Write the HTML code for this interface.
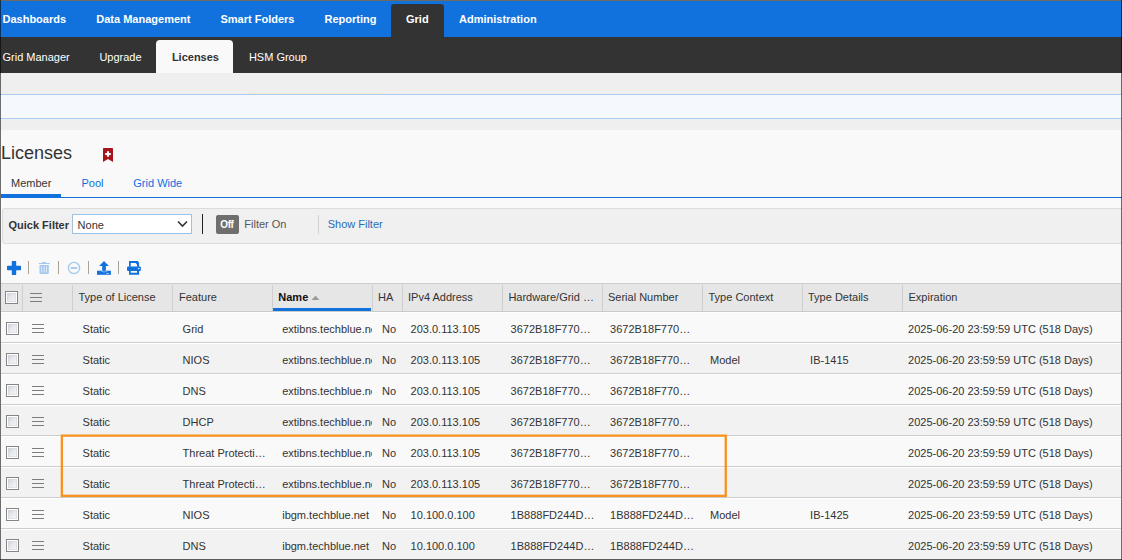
<!DOCTYPE html>
<html><head><meta charset="utf-8">
<style>
*{margin:0;padding:0;box-sizing:border-box}
html,body{width:1122px;height:560px;overflow:hidden;background:#f9f9f9;font-family:"Liberation Sans",sans-serif;font-size:11px;color:#333}
.a{position:absolute;white-space:nowrap}
#nav{position:absolute;left:0;top:0;width:1122px;height:37px;background:#1172de}
#nav .i{position:absolute;top:0;height:37px;line-height:38px;color:#fff;font-weight:bold}
#nav .act{background:#333;top:4px;height:33px;line-height:30px;border-radius:3px 3px 0 0}
#sub{position:absolute;left:0;top:37px;width:1122px;height:36px;background:#333}
#sub .i{position:absolute;top:0;height:36px;line-height:40px;color:#fff}
#sub .act{background:#f9f9f9;top:3px;height:33px;line-height:34px;border-radius:4px 4px 0 0;color:#333;font-weight:bold}
#strip{position:absolute;left:0;top:73px;width:1122px;height:57px;background:#efefef}
#bluebox{position:absolute;left:0;top:94px;width:1122px;height:25px;background:#f5f9fe;border-top:1px solid #a9cbf1;border-bottom:1px solid #a9cbf1}

.title{position:absolute;left:1px;top:143px;font-size:18px;line-height:20px;color:#333}
.tab{position:absolute;top:176px;line-height:14px;color:#0e6fe0}
#filter{position:absolute;left:2px;top:208px;width:1130px;height:36px;background:#f0f0f0;border:1px solid #dcdcdc;border-radius:3px}
.tb-sep{position:absolute;top:261px;width:1px;height:13px;background:#aaa497}
#thead{position:absolute;left:1px;top:283px;width:1120px;height:29px;background:#e6e6e6;border-top:1px solid #cdcdcd;border-bottom:1px solid #cbcbcb}
.th{position:absolute;top:0;height:27px;line-height:14px;padding-top:6px;color:#333;overflow:hidden;text-overflow:ellipsis;white-space:nowrap}
.vd{position:absolute;top:1px;width:1px;height:26px;background:#cfcfcf}
.row{position:absolute;left:1px;width:1120px;height:31px;border-bottom:1px solid #cdcdcd;box-shadow:inset 0 1px 0 #fff}
.td{position:absolute;top:0;height:30px;line-height:14px;padding-top:10px;padding-left:10px;color:#333;overflow:hidden;white-space:nowrap}
.el{text-overflow:ellipsis}
.cb{position:absolute;width:13px;height:13px;border:1.5px solid #858585;background:linear-gradient(135deg,#c3c8d3 0%,#e6e8ec 45%,#fafafa 100%);box-shadow:inset 0 0 0 1px #fff,inset 0 0 0 1.6px #d3d6dc}
.hb{position:absolute;width:12px;height:9px;border-top:1px solid #7d7d7d;border-bottom:1px solid #7d7d7d}
.hb:after{content:"";position:absolute;left:0;top:3px;width:12px;height:1px;background:#7d7d7d}
.frame{position:absolute;background:rgba(0,0,0,.56)}
</style></head><body>
<div id="nav">
  <div class="i" style="left:2.5px">Dashboards</div>
  <div class="i" style="left:96.3px">Data Management</div>
  <div class="i" style="left:220.5px">Smart Folders</div>
  <div class="i" style="left:324.5px">Reporting</div>
  <div class="i act" style="left:391px;width:52.6px;padding-left:15px">Grid</div>
  <div class="i" style="left:459px">Administration</div>
</div>
<div id="sub">
  <div class="i" style="left:2.5px">Grid Manager</div>
  <div class="i" style="left:99.4px">Upgrade</div>
  <div class="i act" style="left:156px;width:77px;padding-left:15.9px">Licenses</div>
  <div class="i" style="left:248.9px">HSM Group</div>
</div>
<div id="strip"></div>
<div id="bluebox"></div>
<div class="a" style="left:255px;top:93px;width:131px;height:1px;background:#f4efcc"></div>
<div class="a" style="left:249px;top:93px;width:4px;height:1px;background:#f6f09a"></div>

<div class="title">Licenses</div>
<svg class="a" style="left:103px;top:148px" width="10" height="14" viewBox="0 0 10 14"><path d="M0.8 0H9.2Q10 0 10 0.8V14L5 11L0 14V0.8Q0 0 0.8 0Z" fill="#a8141c"/><path d="M5 3.2V8.8M2.2 6H7.8" stroke="#fff" stroke-width="2.1"/></svg>
<div class="tab" style="left:11px;color:#333">Member</div>
<div class="tab" style="left:81.5px">Pool</div>
<div class="tab" style="left:133.3px">Grid Wide</div>
<div class="a" style="left:1px;top:194px;width:60px;height:4px;background:#1172de"></div>
<div class="a" style="left:1px;top:197px;width:1121px;height:1px;background:#1172de"></div>

<div id="filter"></div>
<div class="a" style="left:8.5px;top:218px;line-height:14px;font-weight:bold;color:#333">Quick Filter</div>
<div class="a" style="left:72px;top:214px;width:120px;height:20px;background:#fff;border:1px solid #97c3f0;border-left-color:#aabfd3"></div>
<div class="a" style="left:77.6px;top:218px;line-height:14px;color:#333">None</div>
<svg class="a" style="left:177px;top:220px" width="11" height="8" viewBox="0 0 11 8"><path d="M1 1.5L5.5 6L10 1.5" fill="none" stroke="#333" stroke-width="1.6"/></svg>
<div class="a" style="left:202px;top:214px;width:1px;height:20px;background:#222"></div>
<div class="a" style="left:216.2px;top:215px;width:22.6px;height:18.6px;background:#6e6e6e;border-radius:2px"></div>
<div class="a" style="left:220.3px;top:219px;line-height:12px;font-size:10px;letter-spacing:-0.4px;font-weight:bold;color:#fff">Off</div>
<div class="a" style="left:244.3px;top:217px;line-height:14px;color:#555">Filter On</div>
<div class="a" style="left:317.5px;top:215px;width:1px;height:19px;background:#d2d2d2"></div>
<div class="a" style="left:327.7px;top:217px;line-height:14px;color:#2a6db4">Show Filter</div>

<svg class="a" style="left:7px;top:261px" width="14" height="14" viewBox="0 0 14 14"><path d="M7 1V13M1 7H13" stroke="#1172de" stroke-width="4.4" stroke-linecap="round"/></svg>
<div class="tb-sep" style="left:28px"></div>
<svg class="a" style="left:34px;top:258px" width="20" height="20" viewBox="0 0 20 20"><path d="M8.2 4H11.8V5H8.2Z M4.8 5H15.7V6.1H4.8Z" fill="#a3c8ee"/><path d="M5.5 7H14.8V15Q14.8 16 13.8 16H6.5Q5.5 16 5.5 15Z" fill="#a3c8ee"/><path d="M7.3 8.2H8.1V14.6H7.3Z M9.8 8.2H10.6V14.6H9.8Z M12.1 8.2H12.9V14.6H12.1Z" fill="#eaf3fc"/></svg>
<div class="tb-sep" style="left:58px"></div>
<svg class="a" style="left:67px;top:261px" width="14" height="14" viewBox="0 0 14 14"><circle cx="7" cy="7" r="5.6" fill="none" stroke="#a5c9ec" stroke-width="1.3"/><path d="M3.8 7H10.2" stroke="#a5c9ec" stroke-width="1.9"/></svg>
<div class="tb-sep" style="left:88px"></div>
<svg class="a" style="left:92px;top:258px" width="22" height="20" viewBox="0 0 22 20"><path d="M12 3L16.9 7.9H13.9V12.8H10.2V7.9H7.1Z" fill="#1172de"/><path d="M5 12.7H18.9V16.8H5Z" fill="#1172de"/><path d="M8.9 12.9Q12 15.4 15.4 12.9" fill="none" stroke="#fff" stroke-width="0.6" opacity=".75"/><rect x="14.3" y="15.1" width="2.7" height="0.8" fill="#fff" opacity=".7"/></svg>
<div class="tb-sep" style="left:118px"></div>
<svg class="a" style="left:122px;top:258px" width="24" height="20" viewBox="0 0 24 20"><path d="M7 3H15.7L17.1 4.4V8.7H15V6.5L13.5 5H8.75V8.7H7Z" fill="#1172de"/><path d="M6 8.6H18Q18.9 8.6 18.9 9.5V12.1Q18.9 13 18 13H6Q5 13 5 12.1V9.5Q5 8.6 6 8.6Z" fill="#1172de"/><path d="M7 12.9H17.1V16.8H7Z M8.75 13.1V14.8H15V13.1Z" fill="#1172de" fill-rule="evenodd"/><rect x="15.9" y="10" width="1.8" height="1.1" fill="#fff" opacity=".85"/></svg>

<div id="thead">
<div class="cb" style="left:4px;top:7px"></div>
<div class="vd" style="left:21px"></div>
<div class="hb" style="left:29px;top:9px"></div>
<div class="vd" style="left:71px"></div>
<div class="th" style="left:72px;width:98px;padding-left:5.5px;padding-right:6px">Type of License</div>
<div class="vd" style="left:171px"></div>
<div class="th" style="left:172px;width:98px;padding-left:6px;padding-right:6px">Feature</div>
<div class="vd" style="left:271px"></div>
<div class="th" style="left:272px;width:100px;padding-left:5.3px;font-weight:bold;color:#111">Name</div>
<svg class="a" style="left:310.3px;top:11px" width="9" height="6" viewBox="0 0 9 6"><path d="M0.5 5L4.5 0.8L8.5 5Z" fill="#999"/></svg>
<div class="a" style="left:272px;top:24px;width:98px;height:3px;background:#1172de"></div>
<div class="vd" style="left:371px"></div>
<div class="th" style="left:372px;width:28px;padding-left:5px;padding-right:6px">HA</div>
<div class="vd" style="left:401px"></div>
<div class="th" style="left:402px;width:98px;padding-left:5px;padding-right:6px">IPv4 Address</div>
<div class="vd" style="left:501px"></div>
<div class="th" style="left:502px;width:98px;padding-left:5.4px;padding-right:6px">Hardware/Grid Member ID</div>
<div class="vd" style="left:601px"></div>
<div class="th" style="left:602px;width:98px;padding-left:5px;padding-right:6px">Serial Number</div>
<div class="vd" style="left:701px"></div>
<div class="th" style="left:702px;width:98px;padding-left:5.5px;padding-right:6px">Type Context</div>
<div class="vd" style="left:801px"></div>
<div class="th" style="left:802px;width:98px;padding-left:5px;padding-right:6px">Type Details</div>
<div class="vd" style="left:901px"></div>
<div class="th" style="left:902px;width:217px;padding-left:5.5px;padding-right:6px">Expiration</div>
</div>
<div class="row" style="top:312px;background:#f9f9f9">
<div class="cb" style="left:5px;top:10px"></div>
<div class="hb" style="left:31px;top:12px"></div>
<div class="td el" style="left:72px;width:99px;padding-left:9.6px;padding-right:6px">Static</div>
<div class="td el" style="left:172px;width:99px;padding-left:9.6px;padding-right:4px">Grid</div>
<div class="td" style="left:272px;width:99px;padding-left:9.2px;padding-right:0px">extibns.techblue.net</div>
<div class="td" style="left:372px;width:29px;padding-left:9.0px;padding-right:0px">No</div>
<div class="td el" style="left:402px;width:99px;padding-left:7.6px;padding-right:6px">203.0.113.105</div>
<div class="td el" style="left:502px;width:99px;padding-left:7.6px;padding-right:6px">3672B18F770E4F5A</div>
<div class="td el" style="left:602px;width:99px;padding-left:7.1px;padding-right:6px">3672B18F770E4F5A</div>
<div class="td el" style="left:702px;width:99px;padding-left:7.1px;padding-right:6px"></div>
<div class="td el" style="left:802px;width:99px;padding-left:7.1px;padding-right:6px"></div>
<div class="td el" style="left:902px;width:218px;padding-left:5.1px;padding-right:6px">2025-06-20 23:59:59 UTC (518 Days)</div>
</div>
<div class="row" style="top:343px;background:#f2f2f2">
<div class="cb" style="left:5px;top:10px"></div>
<div class="hb" style="left:31px;top:12px"></div>
<div class="td el" style="left:72px;width:99px;padding-left:9.6px;padding-right:6px">Static</div>
<div class="td el" style="left:172px;width:99px;padding-left:9.6px;padding-right:4px">NIOS</div>
<div class="td" style="left:272px;width:99px;padding-left:9.2px;padding-right:0px">extibns.techblue.net</div>
<div class="td" style="left:372px;width:29px;padding-left:9.0px;padding-right:0px">No</div>
<div class="td el" style="left:402px;width:99px;padding-left:7.6px;padding-right:6px">203.0.113.105</div>
<div class="td el" style="left:502px;width:99px;padding-left:7.6px;padding-right:6px">3672B18F770E4F5A</div>
<div class="td el" style="left:602px;width:99px;padding-left:7.1px;padding-right:6px">3672B18F770E4F5A</div>
<div class="td el" style="left:702px;width:99px;padding-left:7.1px;padding-right:6px">Model</div>
<div class="td el" style="left:802px;width:99px;padding-left:7.1px;padding-right:6px">IB-1415</div>
<div class="td el" style="left:902px;width:218px;padding-left:5.1px;padding-right:6px">2025-06-20 23:59:59 UTC (518 Days)</div>
</div>
<div class="row" style="top:374px;background:#f9f9f9">
<div class="cb" style="left:5px;top:10px"></div>
<div class="hb" style="left:31px;top:12px"></div>
<div class="td el" style="left:72px;width:99px;padding-left:9.6px;padding-right:6px">Static</div>
<div class="td el" style="left:172px;width:99px;padding-left:9.6px;padding-right:4px">DNS</div>
<div class="td" style="left:272px;width:99px;padding-left:9.2px;padding-right:0px">extibns.techblue.net</div>
<div class="td" style="left:372px;width:29px;padding-left:9.0px;padding-right:0px">No</div>
<div class="td el" style="left:402px;width:99px;padding-left:7.6px;padding-right:6px">203.0.113.105</div>
<div class="td el" style="left:502px;width:99px;padding-left:7.6px;padding-right:6px">3672B18F770E4F5A</div>
<div class="td el" style="left:602px;width:99px;padding-left:7.1px;padding-right:6px">3672B18F770E4F5A</div>
<div class="td el" style="left:702px;width:99px;padding-left:7.1px;padding-right:6px"></div>
<div class="td el" style="left:802px;width:99px;padding-left:7.1px;padding-right:6px"></div>
<div class="td el" style="left:902px;width:218px;padding-left:5.1px;padding-right:6px">2025-06-20 23:59:59 UTC (518 Days)</div>
</div>
<div class="row" style="top:405px;background:#f2f2f2">
<div class="cb" style="left:5px;top:10px"></div>
<div class="hb" style="left:31px;top:12px"></div>
<div class="td el" style="left:72px;width:99px;padding-left:9.6px;padding-right:6px">Static</div>
<div class="td el" style="left:172px;width:99px;padding-left:9.6px;padding-right:4px">DHCP</div>
<div class="td" style="left:272px;width:99px;padding-left:9.2px;padding-right:0px">extibns.techblue.net</div>
<div class="td" style="left:372px;width:29px;padding-left:9.0px;padding-right:0px">No</div>
<div class="td el" style="left:402px;width:99px;padding-left:7.6px;padding-right:6px">203.0.113.105</div>
<div class="td el" style="left:502px;width:99px;padding-left:7.6px;padding-right:6px">3672B18F770E4F5A</div>
<div class="td el" style="left:602px;width:99px;padding-left:7.1px;padding-right:6px">3672B18F770E4F5A</div>
<div class="td el" style="left:702px;width:99px;padding-left:7.1px;padding-right:6px"></div>
<div class="td el" style="left:802px;width:99px;padding-left:7.1px;padding-right:6px"></div>
<div class="td el" style="left:902px;width:218px;padding-left:5.1px;padding-right:6px">2025-06-20 23:59:59 UTC (518 Days)</div>
</div>
<div class="row" style="top:436px;background:#f9f9f9">
<div class="cb" style="left:5px;top:10px"></div>
<div class="hb" style="left:31px;top:12px"></div>
<div class="td el" style="left:72px;width:99px;padding-left:9.6px;padding-right:6px">Static</div>
<div class="td el" style="left:172px;width:99px;padding-left:9.6px;padding-right:4px">Threat Protection Software</div>
<div class="td" style="left:272px;width:99px;padding-left:9.2px;padding-right:0px">extibns.techblue.net</div>
<div class="td" style="left:372px;width:29px;padding-left:9.0px;padding-right:0px">No</div>
<div class="td el" style="left:402px;width:99px;padding-left:7.6px;padding-right:6px">203.0.113.105</div>
<div class="td el" style="left:502px;width:99px;padding-left:7.6px;padding-right:6px">3672B18F770E4F5A</div>
<div class="td el" style="left:602px;width:99px;padding-left:7.1px;padding-right:6px">3672B18F770E4F5A</div>
<div class="td el" style="left:702px;width:99px;padding-left:7.1px;padding-right:6px"></div>
<div class="td el" style="left:802px;width:99px;padding-left:7.1px;padding-right:6px"></div>
<div class="td el" style="left:902px;width:218px;padding-left:5.1px;padding-right:6px">2025-06-20 23:59:59 UTC (518 Days)</div>
</div>
<div class="row" style="top:467px;background:#f2f2f2">
<div class="cb" style="left:5px;top:10px"></div>
<div class="hb" style="left:31px;top:12px"></div>
<div class="td el" style="left:72px;width:99px;padding-left:9.6px;padding-right:6px">Static</div>
<div class="td el" style="left:172px;width:99px;padding-left:9.6px;padding-right:4px">Threat Protection Update</div>
<div class="td" style="left:272px;width:99px;padding-left:9.2px;padding-right:0px">extibns.techblue.net</div>
<div class="td" style="left:372px;width:29px;padding-left:9.0px;padding-right:0px">No</div>
<div class="td el" style="left:402px;width:99px;padding-left:7.6px;padding-right:6px">203.0.113.105</div>
<div class="td el" style="left:502px;width:99px;padding-left:7.6px;padding-right:6px">3672B18F770E4F5A</div>
<div class="td el" style="left:602px;width:99px;padding-left:7.1px;padding-right:6px">3672B18F770E4F5A</div>
<div class="td el" style="left:702px;width:99px;padding-left:7.1px;padding-right:6px"></div>
<div class="td el" style="left:802px;width:99px;padding-left:7.1px;padding-right:6px"></div>
<div class="td el" style="left:902px;width:218px;padding-left:5.1px;padding-right:6px">2025-06-20 23:59:59 UTC (518 Days)</div>
</div>
<div class="row" style="top:498px;background:#f9f9f9">
<div class="cb" style="left:5px;top:10px"></div>
<div class="hb" style="left:31px;top:12px"></div>
<div class="td el" style="left:72px;width:99px;padding-left:9.6px;padding-right:6px">Static</div>
<div class="td el" style="left:172px;width:99px;padding-left:9.6px;padding-right:4px">NIOS</div>
<div class="td" style="left:272px;width:99px;padding-left:9.2px;padding-right:0px">ibgm.techblue.net</div>
<div class="td" style="left:372px;width:29px;padding-left:9.0px;padding-right:0px">No</div>
<div class="td el" style="left:402px;width:99px;padding-left:7.6px;padding-right:6px">10.100.0.100</div>
<div class="td el" style="left:502px;width:99px;padding-left:7.6px;padding-right:6px">1B888FD244D7A1C3</div>
<div class="td el" style="left:602px;width:99px;padding-left:7.1px;padding-right:6px">1B888FD244D7A1C3</div>
<div class="td el" style="left:702px;width:99px;padding-left:7.1px;padding-right:6px">Model</div>
<div class="td el" style="left:802px;width:99px;padding-left:7.1px;padding-right:6px">IB-1425</div>
<div class="td el" style="left:902px;width:218px;padding-left:5.1px;padding-right:6px">2025-06-20 23:59:59 UTC (518 Days)</div>
</div>
<div class="row" style="top:529px;background:#f2f2f2">
<div class="cb" style="left:5px;top:10px"></div>
<div class="hb" style="left:31px;top:12px"></div>
<div class="td el" style="left:72px;width:99px;padding-left:9.6px;padding-right:6px">Static</div>
<div class="td el" style="left:172px;width:99px;padding-left:9.6px;padding-right:4px">DNS</div>
<div class="td" style="left:272px;width:99px;padding-left:9.2px;padding-right:0px">ibgm.techblue.net</div>
<div class="td" style="left:372px;width:29px;padding-left:9.0px;padding-right:0px">No</div>
<div class="td el" style="left:402px;width:99px;padding-left:7.6px;padding-right:6px">10.100.0.100</div>
<div class="td el" style="left:502px;width:99px;padding-left:7.6px;padding-right:6px">1B888FD244D7A1C3</div>
<div class="td el" style="left:602px;width:99px;padding-left:7.1px;padding-right:6px">1B888FD244D7A1C3</div>
<div class="td el" style="left:702px;width:99px;padding-left:7.1px;padding-right:6px"></div>
<div class="td el" style="left:802px;width:99px;padding-left:7.1px;padding-right:6px"></div>
<div class="td el" style="left:902px;width:218px;padding-left:5.1px;padding-right:6px">2025-06-20 23:59:59 UTC (518 Days)</div>
</div>
<svg class="a" style="left:0;top:0" width="1122" height="560"><rect x="61.85" y="435.65" width="663.9" height="60.2" fill="none" stroke="#f7921e" stroke-width="2.3"/></svg>
<div class="frame" style="left:0;top:0;width:1122px;height:1px;background:#6e6a5f"></div>
<div class="frame" style="left:0;top:0;width:1px;height:560px"></div>
<div class="frame" style="left:1121px;top:0;width:1px;height:560px"></div>
<div class="frame" style="left:0;top:559px;width:1122px;height:1px"></div>
</body></html>
